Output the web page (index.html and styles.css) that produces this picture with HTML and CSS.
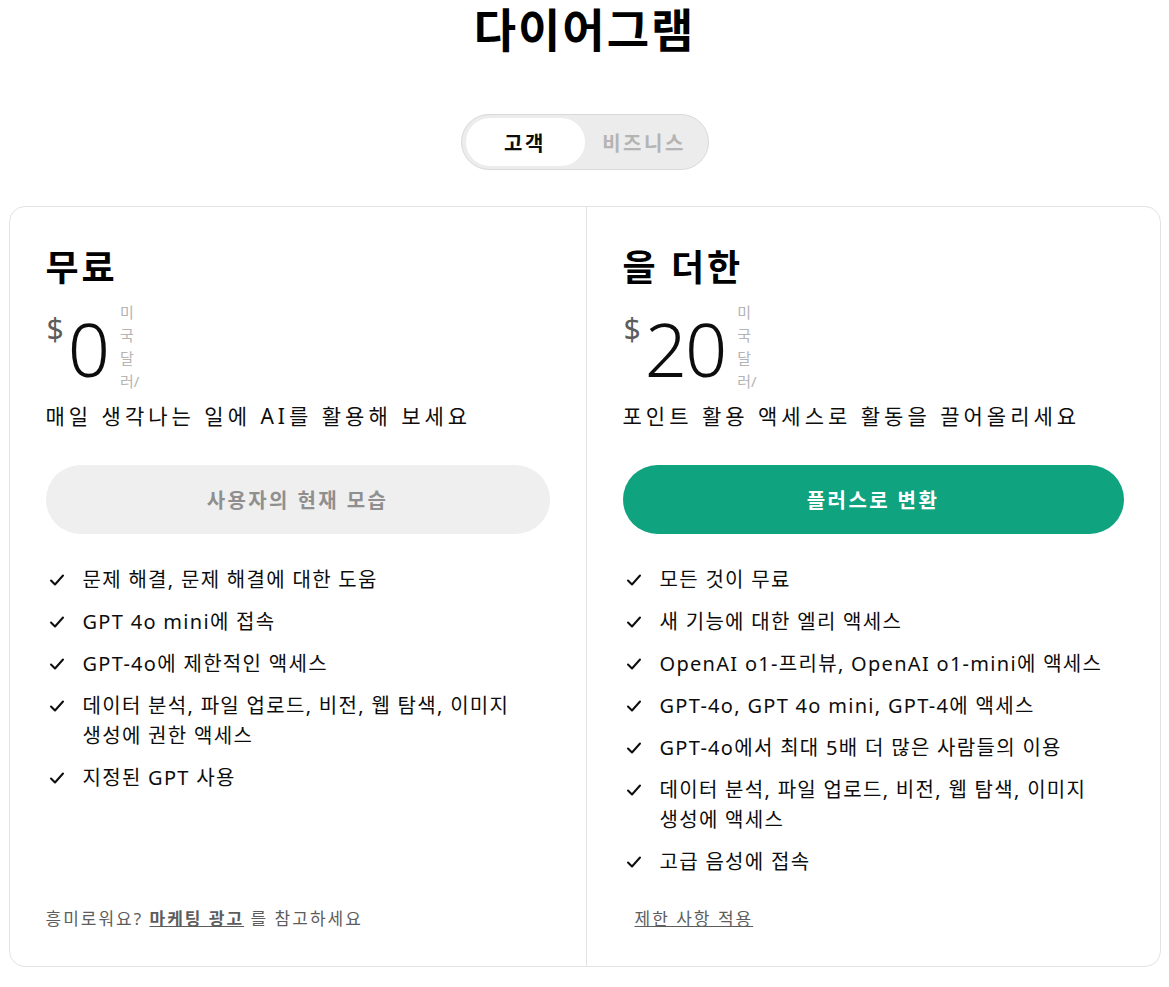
FILE: index.html
```html
<!DOCTYPE html>
<html lang="ko">
<head>
<meta charset="utf-8">
<title>다이어그램</title>
<link rel="stylesheet" href="styles.css">
</head>
<body>
<main class="page">
  <h1 class="title">다이어그램</h1>
  <div class="toggle">
    <span class="toggle-item active">고객</span>
    <span class="toggle-item">비즈니스</span>
  </div>
  <section class="plans">
    <div class="plan">
      <h2 class="plan-name">무료</h2>
      <div class="price">
        <span class="cur">$</span>
        <span class="amount">0</span>
        <span class="unit">미국 달러/</span>
      </div>
      <p class="desc">매일 생각나는 일에 AI를 활용해 보세요</p>
      <div class="btn btn-current">사용자의 현재 모습</div>
      <ul class="features">
        <li><svg class="check" viewBox="0 0 16 16"><path d="M2 8.5l4 4 8-9"/></svg><span>문제 해결, 문제 해결에 대한 도움</span></li>
        <li><svg class="check" viewBox="0 0 16 16"><path d="M2 8.5l4 4 8-9"/></svg><span>GPT 4o mini에 접속</span></li>
        <li><svg class="check" viewBox="0 0 16 16"><path d="M2 8.5l4 4 8-9"/></svg><span>GPT-4o에 제한적인 액세스</span></li>
        <li><svg class="check" viewBox="0 0 16 16"><path d="M2 8.5l4 4 8-9"/></svg><span>데이터 분석, 파일 업로드, 비전, 웹 탐색, 이미지 생성에 권한 액세스</span></li>
        <li><svg class="check" viewBox="0 0 16 16"><path d="M2 8.5l4 4 8-9"/></svg><span>지정된 GPT 사용</span></li>
      </ul>
      <p class="foot">흥미로워요? <a class="foot-link" href="#">마케팅 광고</a> 를 참고하세요</p>
    </div>
    <div class="plan plan-plus">
      <h2 class="plan-name">을 더한</h2>
      <div class="price">
        <span class="cur">$</span>
        <span class="amount">20</span>
        <span class="unit">미국 달러/</span>
      </div>
      <p class="desc">포인트 활용 액세스로 활동을 끌어올리세요</p>
      <div class="btn btn-upgrade">플러스로 변환</div>
      <ul class="features">
        <li><svg class="check" viewBox="0 0 16 16"><path d="M2 8.5l4 4 8-9"/></svg><span>모든 것이 무료</span></li>
        <li><svg class="check" viewBox="0 0 16 16"><path d="M2 8.5l4 4 8-9"/></svg><span>새 기능에 대한 엘리 액세스</span></li>
        <li><svg class="check" viewBox="0 0 16 16"><path d="M2 8.5l4 4 8-9"/></svg><span>OpenAI o1-프리뷰, OpenAI o1-mini에 액세스</span></li>
        <li><svg class="check" viewBox="0 0 16 16"><path d="M2 8.5l4 4 8-9"/></svg><span>GPT-4o, GPT 4o mini, GPT-4에 액세스</span></li>
        <li><svg class="check" viewBox="0 0 16 16"><path d="M2 8.5l4 4 8-9"/></svg><span>GPT-4o에서 최대 5배 더 많은 사람들의 이용</span></li>
        <li><svg class="check" viewBox="0 0 16 16"><path d="M2 8.5l4 4 8-9"/></svg><span>데이터 분석, 파일 업로드, 비전, 웹 탐색, 이미지 생성에 액세스</span></li>
        <li><svg class="check" viewBox="0 0 16 16"><path d="M2 8.5l4 4 8-9"/></svg><span>고급 음성에 접속</span></li>
      </ul>
      <p class="foot foot-plus"><a class="foot-link plain" href="#">제한 사항 적용</a></p>
    </div>
  </section>
</main>
</body>
</html>
```

FILE: styles.css
```css
* { box-sizing: border-box; }
html, body { margin: 0; padding: 0; background: #fff; }
body {
  font-family: "Noto Sans", "Noto Sans CJK KR", sans-serif;
  color: #0d0d0d;
}
.page { display: flex; flex-direction: column; align-items: center; }
.title {
  margin: 0;
  font-size: 46px;
  line-height: 58px;
  font-weight: 700;
  color: #000;
  letter-spacing: 2px;
}
.toggle {
  margin-top: 56px;
  width: 248px;
  height: 56px;
  padding: 3px 4px;
  border: 1px solid #d9d9d9;
  border-radius: 999px;
  background: #ececec;
  display: flex;
  align-items: center;
}
.toggle-item {
  height: 48px;
  display: flex;
  align-items: center;
  justify-content: center;
  font-size: 20px;
  font-weight: 700;
  letter-spacing: 2.5px;
  color: #b4b4b4;
  flex: 1;
}
.toggle-item.active {
  flex: 0 0 119px;
  background: #fff;
  border-radius: 999px;
  color: #0d0d0d;
}
.plans {
  margin-top: 36px;
  width: 1152px;
  height: 761px;
  border: 1px solid #e3e3e3;
  border-radius: 16px;
  display: grid;
  grid-template-columns: 576px 1fr;
}
.plan {
  padding: 39px 36px 35px 36px;
  display: flex;
  flex-direction: column;
}
.plan-plus { border-left: 1px solid #e3e3e3; }
.plan-name {
  margin: 0;
  font-size: 36px;
  line-height: 44px;
  font-weight: 700;
  letter-spacing: 3px;
  color: #000;
}
.price {
  margin-top: 11px;
  display: flex;
  align-items: flex-start;
}
.cur {
  font-size: 30px;
  line-height: 36px;
  color: #5d5d5d;
  margin-top: 10px;
  margin-left: 1px;
}
.amount {
  font-size: 74px;
  line-height: 80px;
  font-weight: 300;
  color: #0d0d0d;
  margin-top: 8px;
  margin-left: 4px;
  letter-spacing: -2px;
}
.unit {
  width: 18px;
  margin-left: 12px;
  font-size: 15px;
  line-height: 23px;
  color: #b4b4b4;
  word-break: break-all;
}
.desc {
  margin: 8px 0 0;
  font-size: 21px;
  line-height: 30px;
  letter-spacing: 4px;
  color: #0d0d0d;
  word-break: keep-all;
}
.btn {
  margin-top: 34px;
  height: 69px;
  border-radius: 999px;
  display: flex;
  align-items: center;
  justify-content: center;
  font-size: 20px;
  font-weight: 700;
  letter-spacing: 2.4px;
}
.btn-current { background: #efefef; color: #8f8f8f; }
.btn-upgrade { background: #10a37f; color: #fff; }
.features {
  list-style: none;
  margin: 31px 0 30px;
  padding: 0;
  display: flex;
  flex-direction: column;
  gap: 12px;
}
.features li {
  display: flex;
  align-items: flex-start;
  font-size: 20px;
  line-height: 30px;
  letter-spacing: 1.3px;
  color: #0d0d0d;
  word-break: keep-all;
}
.check {
  flex: 0 0 16px;
  width: 16px;
  height: 16px;
  margin: 7px 18px 0 3px;
  fill: none;
  stroke: #0d0d0d;
  stroke-width: 2;
  stroke-linecap: round;
  stroke-linejoin: round;
}
.foot {
  margin: auto 0 0;
  font-size: 17px;
  line-height: 24px;
  letter-spacing: 2px;
  color: #5d5d5d;
}
.foot-plus { padding-left: 12px; }
.foot-link {
  color: #5d5d5d;
  font-weight: 700;
  text-decoration: underline;
}
.foot-link.plain { font-weight: 400; }
```
